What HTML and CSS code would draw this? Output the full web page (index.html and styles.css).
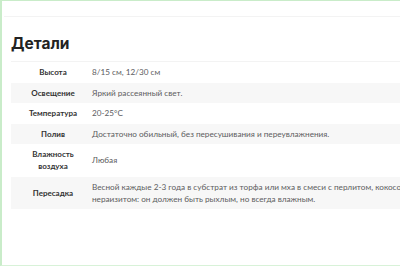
FILE: index.html
```html
<!DOCTYPE html>
<html lang="ru">
<head>
<meta charset="utf-8">
<link rel="stylesheet" href="styles.css">
</head>
<body>
<div class="frame">
  <div class="topbar"></div>
  <section class="details">
    <h2 class="title">Детали</h2>
    <table class="specs">
      <colgroup><col class="col-label"><col class="col-value"></colgroup>
      <tr><th>Высота</th><td>8/15 см, 12/30 см</td></tr>
      <tr class="alt"><th>Освещение</th><td>Яркий рассеянный свет.</td></tr>
      <tr><th>Температура</th><td>20-25°C</td></tr>
      <tr class="alt"><th>Полив</th><td>Достаточно обильный, без пересушивания и переувлажнения.</td></tr>
      <tr><th>Влажность<br>воздуха</th><td>Любая</td></tr>
      <tr class="alt"><th>Пересадка</th><td>Весной каждые 2-3 года в субстрат из торфа или мха в смеси с перлитом, кокосовым волокном и<br>нераизитом: он должен быть рыхлым, но всегда влажным.</td></tr>
    </table>
  </section>
</div>
</body>
</html>
```
FILE: styles.css
```css
html, body {
  margin: 0;
  padding: 0;
  background: #ffffff;
  overflow: hidden;
}
.frame {
  width: 400px;
  height: 266px;
  border-top: 1px solid #c9ecc9;
  border-left: 2px solid #c9ecc9;
  border-bottom: 1px solid #d8f2d8;
  box-sizing: border-box;
  overflow: hidden;
}
.topbar {
  height: 15px;
  margin-left: 2px;
  border-bottom: 1px solid #f3f3f3;
}
.details {
  padding: 0 0 0 9px;
}
.title {
  margin: 0;
  padding: 19px 0 9px 0;
  font-family: Inter, "Liberation Sans", sans-serif;
  font-weight: 700;
  font-size: 15.5px;
  line-height: 16px;
  color: #222222;
  border-bottom: 1px solid #f3f3f3;
}
.specs {
  border-collapse: collapse;
  table-layout: fixed;
  width: 640px;
  font-family: Lato, "Liberation Sans", sans-serif;
  line-height: 12px;
  white-space: nowrap;
}
.col-label {
  width: 80px;
}
.specs th {
  padding: 4.25px 0 4.25px 4px;
  text-align: center;
  font-size: 8px;
  font-weight: 700;
  color: #333333;
}
.specs td {
  padding: 4.25px 0 4.25px 1px;
  text-align: left;
  font-size: 8.2px;
  color: #5c5c60;
}
.specs tr.alt {
  background: #f7f7f7;
}
```
